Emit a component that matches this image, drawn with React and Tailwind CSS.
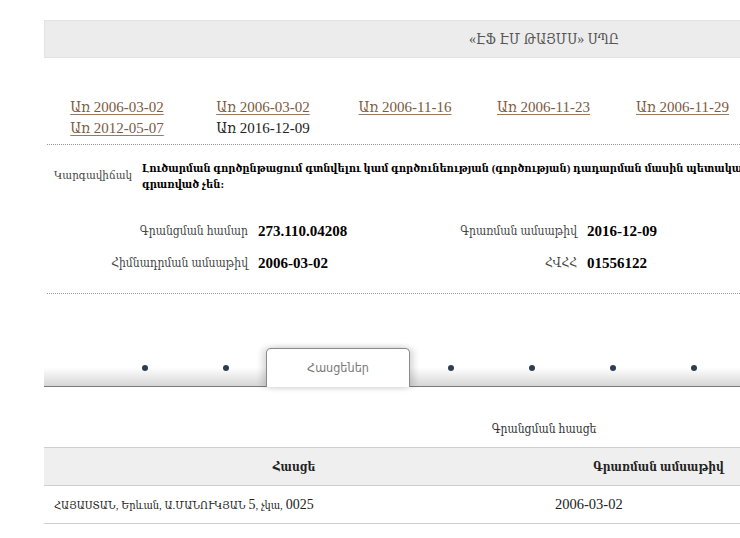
import React from "react";

const serif = "font-['Liberation_Serif','DejaVu_Serif',serif] font-stretch-condensed";

function Cell({ w, children, plain }) {
  return (
    <div className="shrink-0 text-center" style={{ width: w }}>
      {plain ? (
        <span className="text-[#222]">{children}</span>
      ) : (
        <a href="#" className="text-[#7d5a40] underline underline-offset-2 decoration-[#9a7a62]">{children}</a>
      )}
    </div>
  );
}

function Dot() {
  return (
    <div className="w-[81px] shrink-0 flex items-center justify-center h-full">
      <span className="w-[6px] h-[6px] rounded-full bg-[#2c3e50]" />
    </div>
  );
}

export default function App() {
  return (
    <div className={`w-[740px] h-[538px] overflow-hidden bg-white ${serif} text-[13px] text-[#222]`}>
      <div className="ml-[44px] w-[1000px] pt-[20px]">
        {/* Header */}
        <div className="h-[38px] bg-[#ececec] border border-[#e4e4e4] flex items-center justify-center text-[14px] text-[#555]">
          «ԷՖ ԷՄ ԹԱՅՄՍ» ՍՊԸ
        </div>

        {/* Dates */}
        <div className="pt-[39px] pb-[5px] text-[15px] leading-[21px] border-b border-dotted border-[#9a9a9a] ml-[3px]">
          <div className="flex -ml-[3px]">
            <Cell w={146}>Առ 2006-03-02</Cell>
            <Cell w={146}>Առ 2006-03-02</Cell>
            <Cell w={138}>Առ 2006-11-16</Cell>
            <Cell w={139}>Առ 2006-11-23</Cell>
            <Cell w={139}>Առ 2006-11-29</Cell>
            <Cell w={139}>Առ 2006-12-01</Cell>
          </div>
          <div className="flex -ml-[3px]">
            <Cell w={146}>Առ 2012-05-07</Cell>
            <Cell w={146} plain>Առ 2016-12-09</Cell>
          </div>
        </div>

        {/* Status */}
        <div className="flex items-center pt-[15px]">
          <div className="w-[98px] shrink-0 pl-[10px] text-[11.5px] text-[#444] whitespace-nowrap">Կարգավիճակ</div>
          <div className="font-bold text-[11px] leading-[16px] text-black">
            <span className="whitespace-nowrap">Լուծարման գործընթացում գտնվելու կամ գործունեության (գործության) դադարման մասին պետական միասնական գրանցամատյանում տվյալներ</span>
            <br />
            գրառված չեն:
          </div>
        </div>

        {/* Details */}
        <div className="pt-[23px] pb-[14px] border-b border-dotted border-[#9a9a9a] ml-[3px]">
          <div className="grid grid-cols-[201px_206px_123px_1fr] [&>div]:h-[32px] [&>div]:flex [&>div]:items-center">
            <div className="justify-end text-[12px] text-[#444] whitespace-nowrap">Գրանցման համար</div>
            <div className="pl-[10px] font-bold text-[15px] text-black">273.110.04208</div>
            <div className="justify-end text-[12px] text-[#444] whitespace-nowrap">Գրառման ամսաթիվ</div>
            <div className="pl-[10px] font-bold text-[15px] text-black">2016-12-09</div>
            <div className="justify-end text-[12px] text-[#444] whitespace-nowrap">Հիմնադրման ամսաթիվ</div>
            <div className="pl-[10px] font-bold text-[15px] text-black">2006-03-02</div>
            <div className="justify-end text-[12px] text-[#444] whitespace-nowrap">ՀՎՀՀ</div>
            <div className="pl-[10px] font-bold text-[15px] text-black">01556122</div>
          </div>
        </div>

        {/* Tabs */}
        <div className="mt-[54px] relative h-[39px]">
          <div className="absolute left-0 right-0 top-[1px] bottom-0 bg-gradient-to-b from-white via-white to-[#d6d6d6] border-b border-[#7a7a7a]" />
          <div className="relative flex h-full pl-[60px]">
            <Dot />
            <Dot />
            <div className="w-[144px] shrink-0 h-[39px] bg-white border border-b-0 border-[#8a8a8a] rounded-t-[5px] shadow-[4px_0_6px_rgba(0,0,0,0.14),-4px_0_6px_rgba(0,0,0,0.14)] flex items-center justify-center font-['DejaVu_Sans',sans-serif] font-stretch-condensed text-[12.5px] text-[#777]">
              Հասցեներ
            </div>
            <Dot />
            <Dot />
            <Dot />
            <Dot />
            <Dot />
            <Dot />
            <Dot />
          </div>
        </div>

        {/* Address table */}
        <div className="pt-[32px] text-center text-[12px] text-[#333] leading-[20px]">Գրանցման հասցե</div>
        <div className="mt-[8px] border-t border-[#cfcfcf]">
          <div className="grid grid-cols-[500px_229px_1fr] bg-[#efefef] h-[38px] items-center font-bold text-[12px] text-[#222] border-b border-[#cfcfcf]">
            <div className="text-center">Հասցե</div>
            <div className="text-center">Գրառման ամսաթիվ</div>
            <div />
          </div>
          <div className="grid grid-cols-[500px_229px_1fr] h-[38px] items-center text-[11px] text-[#222] border-b border-[#cfcfcf]">
            <div className="pl-[10px]">
              ՀԱՅԱՍՏԱՆ, Երևան, Ա.ՄԱՆՈՒԿՅԱՆ <span className="text-[14px]">5</span>, չկա, <span className="text-[14px]">0025</span>
            </div>
            <div className="pl-[11px] text-[14.5px]">2006-03-02</div>
            <div />
          </div>
        </div>
      </div>
    </div>
  );
}
